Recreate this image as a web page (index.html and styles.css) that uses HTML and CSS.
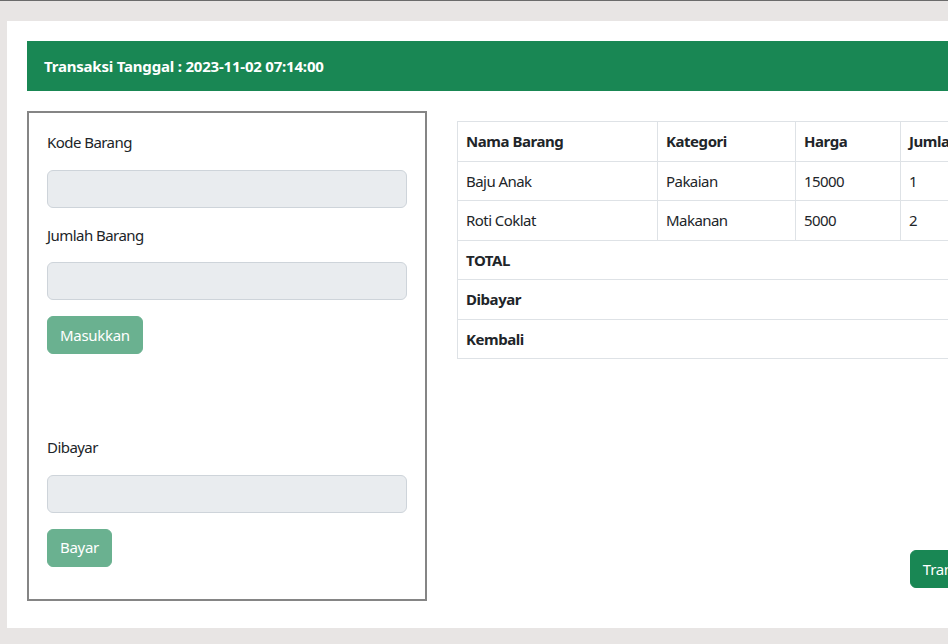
FILE: index.html
```html
<!DOCTYPE html>
<html lang="id">
<head>
<meta charset="utf-8">
<title>Transaksi</title>
<link rel="stylesheet" href="styles.css">
</head>
<body>
<div class="page">
  <div class="panel">
    <div class="header">Transaksi Tanggal : 2023-11-02 07:14:00</div>
    <div class="content">
      <div class="form-box">
        <label class="label">Kode Barang</label>
        <input class="input" type="text" disabled>
        <label class="label">Jumlah Barang</label>
        <input class="input" type="text" disabled>
        <button class="btn btn-disabled" disabled>Masukkan</button>
        <div class="spacer"></div>
        <label class="label">Dibayar</label>
        <input class="input" type="text" disabled>
        <button class="btn btn-disabled" disabled>Bayar</button>
      </div>
      <div class="right">
        <table class="table">
          <colgroup>
            <col class="c1">
            <col class="c2">
            <col class="c3">
            <col class="c4">
            <col>
          </colgroup>
          <thead>
            <tr>
              <th>Nama Barang</th>
              <th>Kategori</th>
              <th>Harga</th>
              <th>Jumlah</th>
              <th>Subtotal</th>
            </tr>
          </thead>
          <tbody>
            <tr>
              <td>Baju Anak</td>
              <td>Pakaian</td>
              <td>15000</td>
              <td>1</td>
              <td>15000</td>
            </tr>
            <tr>
              <td>Roti Coklat</td>
              <td>Makanan</td>
              <td>5000</td>
              <td>2</td>
              <td>10000</td>
            </tr>
            <tr>
              <th colspan="4">TOTAL</th>
              <td></td>
            </tr>
            <tr>
              <th colspan="4">Dibayar</th>
              <td></td>
            </tr>
            <tr>
              <th colspan="4">Kembali</th>
              <td></td>
            </tr>
          </tbody>
        </table>
        <div class="actions">
          <button class="btn btn-success">Transaksi Selesai</button>
        </div>
      </div>
    </div>
  </div>
</div>
</body>
</html>
```
FILE: styles.css
```css
html, body {
  margin: 0;
  padding: 0;
  overflow: hidden;
}

body {
  background: #e8e5e4;
  border-top: 1px solid #6b6b6b;
  font-family: "Noto Sans", "Open Sans", sans-serif;
  font-size: 15px;
  line-height: 22.5px;
  letter-spacing: -0.55px;
  color: #212529;
}

.page {
  padding: 20px 0 0 7px;
  width: 1400px;
}

.panel {
  background: #ffffff;
  padding: 20px 20px 27px 20px;
  width: 1200px;
}

.header {
  background: #198754;
  color: #ffffff;
  font-weight: 700;
  font-size: 15px;
  letter-spacing: -0.2px;
  height: 50px;
  display: flex;
  align-items: center;
  padding: 0 17px;
}

.content {
  display: flex;
  align-items: stretch;
  gap: 30px;
  margin-top: 20px;
}

.form-box {
  border: 2px solid #858585;
  padding: 18px 18px 32.5px 18px;
  box-sizing: border-box;
  width: 400px;
  display: flex;
  flex-direction: column;
  align-items: flex-start;
}

.label {
  display: block;
  line-height: 22.5px;
  height: 22.5px;
  margin-bottom: 16px;
}

.input {
  display: block;
  width: 360px;
  height: 38px;
  box-sizing: border-box;
  background: #e9ecef;
  border: 1px solid #ced4da;
  border-radius: 6px;
  margin: 0 0 16px 0;
  padding: 6px 12px;
  font: inherit;
}

.btn {
  font-family: inherit;
  font-size: 15px;
  letter-spacing: -0.3px;
  height: 38px;
  padding: 0 12px;
  border: 1px solid transparent;
  border-radius: 6px;
  color: #ffffff;
  line-height: 22.5px;
}

.btn-disabled {
  background: #6ab190;
  border-color: #6ab190;
}

.btn-success {
  background: #198754;
  border-color: #198754;
}

.spacer {
  height: 82px;
}

.right {
  margin-top: 10px;
  width: 592px;
  display: flex;
  flex-direction: column;
  justify-content: space-between;
  padding-bottom: 13px;
}

.table {
  border-collapse: collapse;
  width: 100%;
  table-layout: fixed;
}

.table th,
.table td {
  border: 1px solid #dee2e6;
  padding: 8px 8px;
  line-height: 22.5px;
  text-align: left;
  vertical-align: middle;
}

.table th {
  font-weight: 700;
  letter-spacing: -0.45px;
}

.c1 { width: 200px; }
.c2 { width: 138px; }
.c3 { width: 105px; }
.c4 { width: 75px; }

.actions {
  display: flex;
  justify-content: flex-end;
}
```
